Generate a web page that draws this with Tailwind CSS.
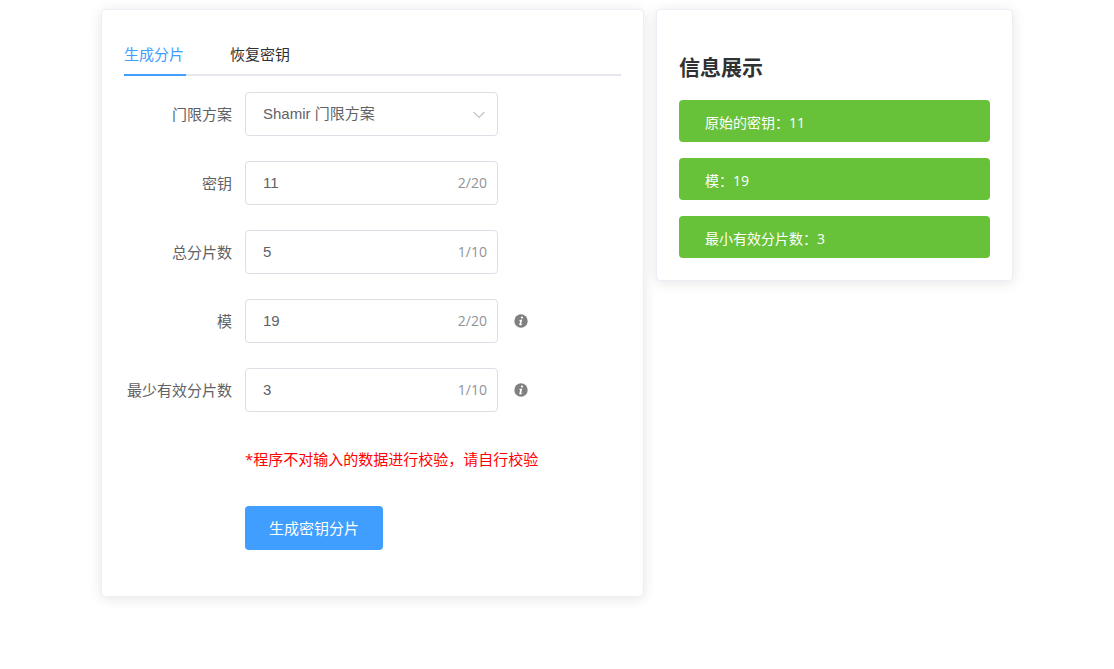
<!DOCTYPE html>
<html lang="zh-CN">
<head>
<meta charset="utf-8">
<meta name="viewport" content="width=device-width, initial-scale=1">
<title>生成分片</title>
<script src="https://cdn.jsdelivr.net/npm/@tailwindcss/browser@4"></script>
</head>
<body class="bg-white font-['Open_Sans','Noto_Sans_CJK_SC',sans-serif] text-[15px] leading-6 text-[#606266]">
<main class="grid grid-cols-[543fr_357fr] items-start gap-3 px-[101px] pt-[9px] pb-8">

  <section class="min-w-0 rounded border border-[#ebeef5] bg-white px-[22px] pt-[22px] pb-[46px] shadow-[0_2px_13px_rgba(0,0,0,0.1)]">
    <nav class="flex gap-11 border-b-2 border-[#e4e7ed] text-[#303133]">
      <a href="#generate" aria-current="page" class="-mb-0.5 block h-11 border-b-2 border-[#409eff] pr-0.5 leading-[44px] text-[#409eff]">生成分片</a>
      <a href="#recover" class="-mb-0.5 block h-11 leading-[44px]">恢复密钥</a>
    </nav>

    <form class="mt-4 flex flex-col gap-[25px]">
      <div class="flex h-11 items-center">
        <label for="scheme" class="mr-[13px] w-[108px] text-right">门限方案</label>
        <div class="relative h-11 w-[253px]">
          <select id="scheme" class="h-11 w-full appearance-none rounded border border-[#dcdfe6] bg-white pr-8 pl-[17px] font-['Liberation_Sans','Noto_Sans_CJK_SC',sans-serif]">
            <option>Shamir 门限方案</option>
          </select>
          <svg class="pointer-events-none absolute top-[19px] right-3 h-2 w-[14px]" viewBox="0 0 14 8" fill="none" stroke="#c0c4cc" stroke-width="1.2" aria-hidden="true"><path d="M1.5 1 7 6.5 12.5 1"/></svg>
        </div>
      </div>

      <div class="flex h-11 items-center">
        <label for="secret" class="mr-[13px] w-[108px] text-right">密钥</label>
        <div class="flex h-11 w-[253px] items-center rounded border border-[#dcdfe6] pr-2.5 pl-[17px]">
          <input id="secret" type="text" maxlength="20" value="11" class="min-w-0 flex-1 font-['Liberation_Sans',sans-serif] outline-none">
          <span class="text-sm text-[#909399]">2/20</span>
        </div>
      </div>

      <div class="flex h-11 items-center">
        <label for="total" class="mr-[13px] w-[108px] text-right">总分片数</label>
        <div class="flex h-11 w-[253px] items-center rounded border border-[#dcdfe6] pr-2.5 pl-[17px]">
          <input id="total" type="text" maxlength="10" value="5" class="min-w-0 flex-1 font-['Liberation_Sans',sans-serif] outline-none">
          <span class="text-sm text-[#909399]">1/10</span>
        </div>
      </div>

      <div class="flex h-11 items-center">
        <label for="modulus" class="mr-[13px] w-[108px] text-right">模</label>
        <div class="flex h-11 w-[253px] items-center rounded border border-[#dcdfe6] pr-2.5 pl-[17px]">
          <input id="modulus" type="text" maxlength="20" value="19" class="min-w-0 flex-1 font-['Liberation_Sans',sans-serif] outline-none">
          <span class="text-sm text-[#909399]">2/20</span>
        </div>
        <svg class="ml-4 size-[14px]" viewBox="0 0 14 14" aria-hidden="true"><circle cx="7" cy="7" r="6.7" fill="#808080"/><circle cx="8" cy="3.5" r="1.1" fill="#fff"/><path d="M5.2 6.1 8.3 5.5 7.1 9.9Q7 10.4 7.4 10.2L8.2 9.6 8.5 10Q7.3 11.5 6.1 11.4 5 11.2 5.4 9.9L6.2 6.8 5.2 6.7Z" fill="#fff"/></svg>
      </div>

      <div class="flex h-11 items-center">
        <label for="threshold" class="mr-[13px] w-[108px] text-right">最少有效分片数</label>
        <div class="flex h-11 w-[253px] items-center rounded border border-[#dcdfe6] pr-2.5 pl-[17px]">
          <input id="threshold" type="text" maxlength="10" value="3" class="min-w-0 flex-1 font-['Liberation_Sans',sans-serif] outline-none">
          <span class="text-sm text-[#909399]">1/10</span>
        </div>
        <svg class="ml-4 size-[14px]" viewBox="0 0 14 14" aria-hidden="true"><circle cx="7" cy="7" r="6.7" fill="#808080"/><circle cx="8" cy="3.5" r="1.1" fill="#fff"/><path d="M5.2 6.1 8.3 5.5 7.1 9.9Q7 10.4 7.4 10.2L8.2 9.6 8.5 10Q7.3 11.5 6.1 11.4 5 11.2 5.4 9.9L6.2 6.8 5.2 6.7Z" fill="#fff"/></svg>
      </div>

      <p class="ml-[121px] h-11 leading-[44px] text-[#ff0000]">*程序不对输入的数据进行校验，请自行校验</p>

      <button type="button" class="ml-[121px] h-11 self-start rounded bg-[#409eff] px-6 text-white">生成密钥分片</button>
    </form>
  </section>

  <section class="min-w-0 rounded border border-[#ebeef5] bg-white p-[22px] shadow-[0_2px_13px_rgba(0,0,0,0.1)]">
    <h2 class="mt-5 mb-[18px] text-[21px] leading-[30px] font-bold text-[#303133]">信息展示</h2>
    <div class="flex flex-col gap-4 text-sm leading-6 text-white">
      <p class="rounded bg-[#67c23a] pt-[11px] pb-[7px] pl-[26px]">原始的密钥：11</p>
      <p class="rounded bg-[#67c23a] pt-[11px] pb-[7px] pl-[26px]">模：19</p>
      <p class="rounded bg-[#67c23a] pt-[11px] pb-[7px] pl-[26px]">最小有效分片数：3</p>
    </div>
  </section>

</main>
</body>
</html>
